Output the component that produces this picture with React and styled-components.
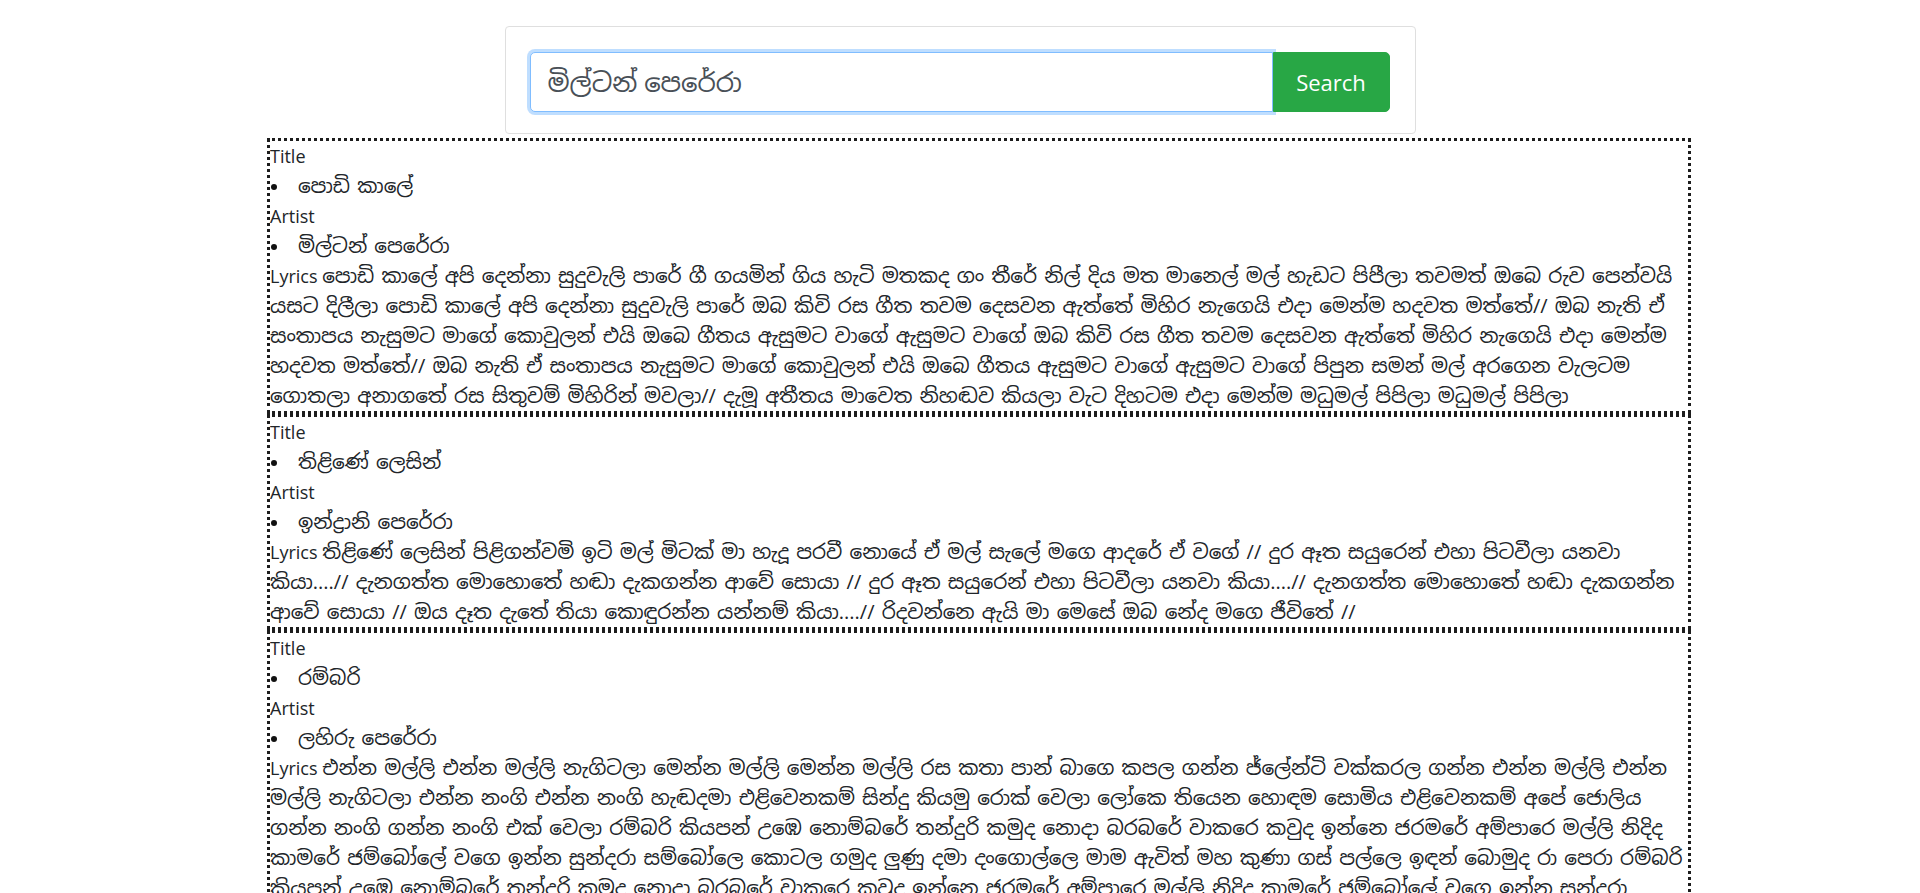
import React from "react";
import styled, { createGlobalStyle } from "styled-components";

const GlobalStyle = createGlobalStyle`
  body {
    margin: 0;
    background: #fff;
    color: #212529;
    font-family: "Segoe UI", "Open Sans", "Noto Sans", "Noto Sans Sinhala", sans-serif;
    font-size: 18px;
    line-height: 30px;
  }
`;

const Page = styled.div`
  padding-top: 26px;
`;

const SearchCard = styled.form`
  box-sizing: border-box;
  width: 911px;
  height: 108px;
  margin: 0 auto;
  padding: 25px 25px 21px 24px;
  border: 1px solid #dfdfdf;
  border-radius: 4px;
  display: flex;
`;

const SearchInput = styled.input`
  box-sizing: border-box;
  flex: 1;
  height: 60px;
  padding: 0 17px;
  border: 1px solid #80bdff;
  border-radius: 5px 0 0 5px;
  box-shadow: 0 0 0 3px rgba(0, 123, 255, 0.25);
  outline: none;
  font: inherit;
  font-size: 26px;
  color: #495057;
`;

const SearchButton = styled.button`
  box-sizing: border-box;
  width: 117px;
  height: 60px;
  border: 1px solid #28a745;
  border-radius: 0 5px 5px 0;
  background: #28a745;
  color: #fff;
  font: inherit;
  font-size: 22px;
  cursor: pointer;
`;

const Results = styled.div`
  width: 1424px;
  margin: 4px 0 0 267px;
`;

const ResultBox = styled.div`
  border: 3px dotted #1d1d1d;
`;

const Label = styled.div``;

const Values = styled.ul`
  margin: 0;
  padding: 0;
  list-style: none;
`;

const Value = styled.li`
  &::before {
    content: "";
    display: inline-block;
    width: 6px;
    height: 6px;
    margin: 0 21px 3px 1px;
    border-radius: 50%;
    background: #111;
    vertical-align: middle;
  }
`;

const Sinhala = styled.span`
  font-size: 20px;
  word-spacing: 2px;
`;

const Lyrics = styled.p`
  margin: 0;
`;

const songs = [
  {
    title: "පොඩි කාලේ",
    artist: "මිල්ටන් පෙරේරා",
    lyrics:
      "පොඩි කාලේ අපි දෙන්නා සුදුවැලි පාරේ ගී ගයමින් ගිය හැටි මතකද ගං තීරේ නිල් දිය මත මානෙල් මල් හැඩට පිපීලා තවමත් ඔබෙ රුව පෙන්වයි යසට දිලීලා පොඩි කාලේ අපි දෙන්නා සුදුවැලි පාරේ ඔබ කිවි රස ගීත තවම දෙසවන ඇත්තේ මිහිර නැගෙයි එදා මෙන්ම හදවත මත්තේ// ඔබ නැති ඒ සංතාපය නැසුමට මාගේ කොවුලන් එයි ඔබෙ ගීතය ඇසුමට වාගේ ඇසුමට වාගේ ඔබ කිවි රස ගීත තවම දෙසවන ඇත්තේ මිහිර නැගෙයි එදා මෙන්ම හදවත මත්තේ// ඔබ නැති ඒ සංතාපය නැසුමට මාගේ කොවුලන් එයි ඔබෙ ගීතය ඇසුමට වාගේ ඇසුමට වාගේ පිපුන සමන් මල් අරගෙන වැලටම ගොතලා අනාගතේ රස සිතුවම් මිහිරින් මවලා// දැමූ අතීතය මාවෙත නිහඬව කියලා වැට දිහටම එදා මෙන්ම මධුමල් පිපිලා මධුමල් පිපිලා",
  },
  {
    title: "තිළිණේ ලෙසින්",
    artist: "ඉන්ද්‍රානි පෙරේරා",
    lyrics:
      "තිළිණේ ලෙසින් පිළිගන්වමි ඉටි මල් මිටක් මා හැදූ පරවී නොයේ ඒ මල් සැලේ මගෙ ආදරේ ඒ වගේ // දුර ඈත සයුරෙන් එහා පිටවීලා යනවා කියා....// දැනගත්ත මොහොතේ හඬා දැකගන්න ආවේ සොයා // දුර ඈත සයුරෙන් එහා පිටවීලා යනවා කියා....// දැනගත්ත මොහොතේ හඬා දැකගන්න ආවේ සොයා // ඔය දෑත දැතේ තියා කොඳුරන්න යන්නම් කියා....// රිදවන්නෙ ඇයි මා මෙසේ ඔබ නේද මගෙ ජීවිතේ //",
  },
  {
    title: "රම්බරි",
    artist: "ලහිරු පෙරේරා",
    lyrics:
      "එන්න මල්ලි එන්න මල්ලි නැගිටලා මෙන්න මල්ලි මෙන්න මල්ලි රස කතා පාන් බාගෙ කපල ගන්න ජ්ලේන්ටි වක්කරල ගන්න එන්න මල්ලි එන්න මල්ලි නැගිටලා එන්න නංගි එන්න නංගි හැඬදමා එළිවෙනකම් සින්දු කියමු රොක් වෙලා ලෝකෙ තියෙන හොඳම සොමිය එළිවෙනකම් අපේ ජොලිය ගන්න නංගි ගන්න නංගි එක් වෙලා රම්බරි කියපන් උඹෙ නොම්බරේ තන්දුරි කමුද නොදා බරබරේ වාකරෙ කවුද ඉන්නෙ ජරමරේ අම්පාරෙ මල්ලි නිදිද කාමරේ ජම්බෝලේ වගෙ ඉන්න සුන්දරා සම්බෝලෙ කොටල ගමුද ලුණු දමා දංගොල්ලෙ මාම ඇවිත් මහ කුණා ගස් පල්ලෙ ඉඳන් බොමුද රා පෙරා රම්බරි කියපන් උඹෙ නොම්බරේ තන්දුරි කමුද නොදා බරබරේ වාකරෙ කවුද ඉන්නෙ ජරමරේ අම්පාරෙ මල්ලි නිදිද කාමරේ ජම්බෝලේ වගෙ ඉන්න සුන්දරා සම්බෝලෙ කොටල ගමුද ලුණු දමා දංගොල්ලෙ මාම ඇවිත් මහ කුණා ගස් පල්ලෙ ඉඳන් බොමුද රා පෙරා",
  },
];

const Song = ({ song }) => (
  <ResultBox>
    <Label>Title</Label>
    <Values>
      <Value>
        <Sinhala>{song.title}</Sinhala>
      </Value>
    </Values>
    <Label>Artist</Label>
    <Values>
      <Value>
        <Sinhala>{song.artist}</Sinhala>
      </Value>
    </Values>
    <Lyrics>
      Lyrics <Sinhala>{song.lyrics}</Sinhala>
    </Lyrics>
  </ResultBox>
);

export default function App() {
  return (
    <Page>
      <GlobalStyle />
      <SearchCard onSubmit={(e) => e.preventDefault()}>
        <SearchInput type="text" defaultValue="මිල්ටන් පෙරේරා" />
        <SearchButton type="submit">Search</SearchButton>
      </SearchCard>
      <Results>
        {songs.map((song) => (
          <Song key={song.title} song={song} />
        ))}
      </Results>
    </Page>
  );
}
